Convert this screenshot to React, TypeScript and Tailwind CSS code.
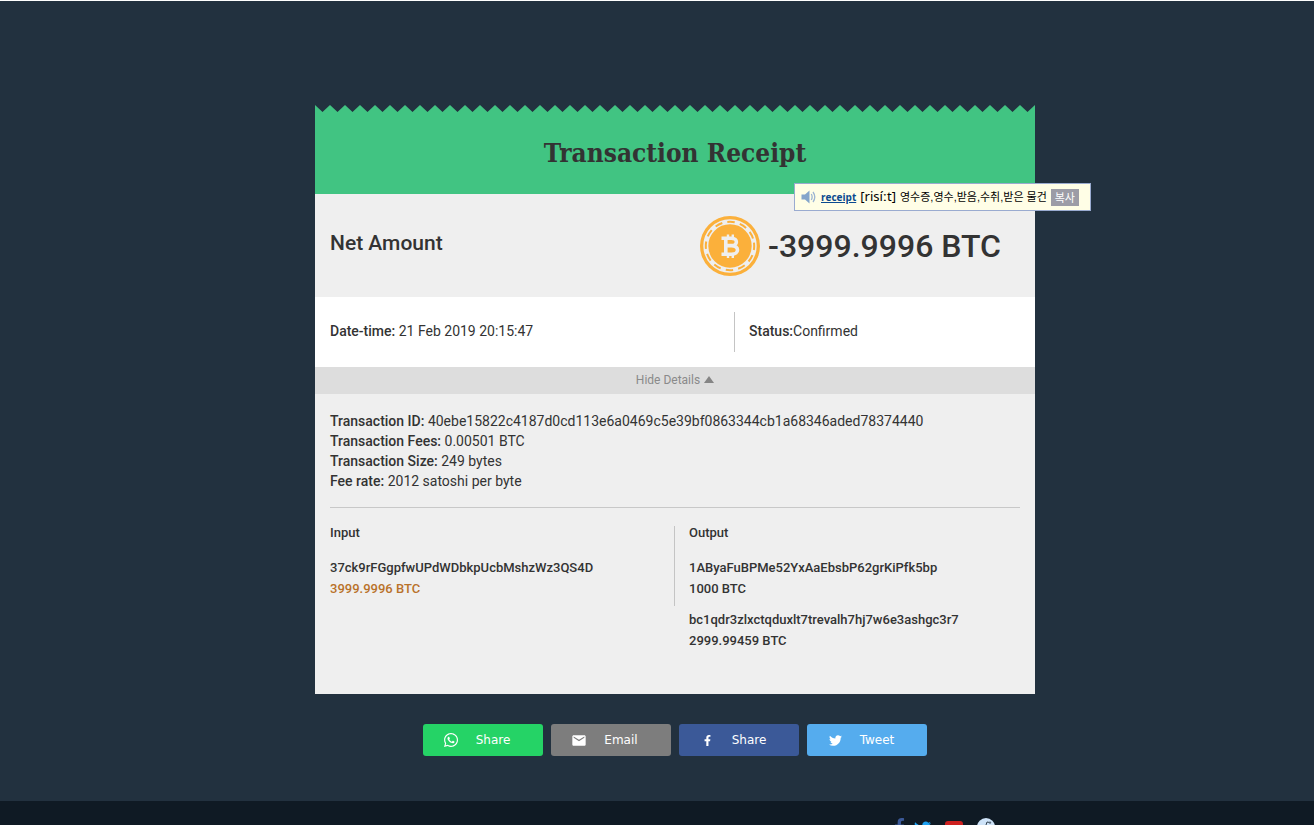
import React from "react";
import { FaFacebookF, FaTwitter, FaWhatsapp } from "react-icons/fa";
import { MdEmail } from "react-icons/md";

function ZigZag() {
  return (
    <svg className="block h-2 w-full" aria-hidden="true">
      <defs>
        <pattern id="teeth" width="15" height="8" patternUnits="userSpaceOnUse">
          <path d="M0 0L7.5 7L15 0V8H0Z" fill="#41c482" />
        </pattern>
      </defs>
      <rect width="100%" height="8" fill="url(#teeth)" />
    </svg>
  );
}

function Coin() {
  return (
    <svg viewBox="0 0 60 60" className="size-15 shrink-0" aria-hidden="true">
      <circle cx="30" cy="30" r="30" fill="#fbb03b" />
      <circle cx="30" cy="30" r="24.2" fill="none" stroke="#efefef" strokeWidth="5" />
      <circle
        cx="30"
        cy="30"
        r="24.2"
        fill="none"
        stroke="#fbb03b"
        strokeWidth="2"
        strokeDasharray="7.4 5.27"
        transform="rotate(-8 30 30)"
      />
      <g fill="none" stroke="#efefef" strokeWidth="3.6">
        <path d="M21.5 22.2H31.5C38 22.2 38 29.6 31.5 29.6H26M31.5 29.6C39.5 29.6 39.5 38.2 31.5 38.2H21.5M25.8 22V38" />
        <path d="M28 18.5V22M32.8 18.5V22M28 38V42M32.8 38V42" strokeWidth="2.4" />
      </g>
    </svg>
  );
}

function Speaker() {
  return (
    <svg viewBox="0 0 16 14" className="h-3.5 w-4 shrink-0" aria-hidden="true">
      <path d="M0.5 4.5H4L8.5 0.5V13.5L4 9.5H0.5Z" fill="#84a5cb" />
      <path
        d="M10.3 4Q12 7 10.3 10M12 2Q15.6 7 12 12"
        fill="none"
        stroke="#9db5d3"
        strokeWidth="1.3"
      />
    </svg>
  );
}

function DictionaryTip() {
  return (
    <div className="absolute top-[78px] left-[479px] flex h-7 w-[297px] items-center gap-1 border border-[#9aabd0] bg-[#fffee6] pl-1.5 whitespace-nowrap text-black">
      <Speaker />
      <a
        href="#receipt"
        className="font-['Open_Sans',sans-serif] text-[10px] font-bold text-[#0b4a8f] underline"
      >
        receipt
      </a>
      <span className="font-['Noto_Sans',sans-serif] text-[13px]">[risíːt]</span>
      <span className="font-['Liberation_Sans','Noto_Sans_CJK_KR',sans-serif] text-[11px]">
        영수증,영수,받음,수취,받은 물건
      </span>
      <button
        type="button"
        className="h-[17px] w-7 bg-[#9c9ca6] font-['Noto_Sans_CJK_KR',sans-serif] text-[11px] leading-[17px] text-white"
      >
        복사
      </button>
    </div>
  );
}

const details = [
  ["Transaction ID:", "40ebe15822c4187d0cd113e6a0469c5e39bf0863344cb1a68346aded78374440"],
  ["Transaction Fees:", "0.00501 BTC"],
  ["Transaction Size:", "249 bytes"],
  ["Fee rate:", "2012 satoshi per byte"],
];

const outputs = [
  ["1AByaFuBPMe52YxAaEbsbP62grKiPfk5bp", "1000 BTC"],
  ["bc1qdr3zlxctqduxlt7trevalh7hj7w6e3ashgc3r7", "2999.99459 BTC"],
];

const shares = [
  { label: "Share", color: "bg-[#25d366]", icon: <FaWhatsapp size={16} /> },
  { label: "Email", color: "bg-[#7d7d7d]", icon: <MdEmail size={17} /> },
  { label: "Share", color: "bg-[#3b5998]", icon: <FaFacebookF size={11} /> },
  { label: "Tweet", color: "bg-[#55acee]", icon: <FaTwitter size={13} /> },
];

function Receipt() {
  return (
    <section className="relative">
      <ZigZag />
      <header className="flex h-[81px] items-center justify-center bg-[#41c482]">
        <h1 className="font-['Roboto_Slab','DejaVu_Serif_Condensed','DejaVu_Serif',serif] text-[26px] font-bold">
          Transaction Receipt
        </h1>
      </header>
      <div className="flex h-[103px] items-center justify-between bg-[#efefef] pr-[34px] pl-[15px]">
        <h2 className="pb-1 text-[21px] font-medium">Net Amount</h2>
        <div className="flex items-center gap-2">
          <Coin />
          <span className="text-[32px] font-medium">-3999.9996 BTC</span>
        </div>
      </div>
      <div className="flex items-center bg-white py-[15px] text-sm">
        <p className="h-10 w-[420px] border-r border-[#c4c4c4] pl-[15px] leading-[38px]">
          <b className="font-medium">Date-time:</b> 21 Feb 2019 20:15:47
        </p>
        <p className="h-10 pl-[14px] leading-[38px]">
          <b className="font-medium">Status:</b>Confirmed
        </p>
      </div>
      <button
        type="button"
        className="flex h-[27px] w-full items-center justify-center gap-1 bg-[#dddddd] pb-0.5 text-xs text-[#8a8a8a]"
      >
        Hide Details
        <svg viewBox="0 0 10 7" className="h-[7px] w-2.5" aria-hidden="true">
          <path d="M5 0L10 7H0Z" fill="#858585" />
        </svg>
      </button>
      <div className="bg-[#efefef] px-[15px] pt-[17px] pb-[43px]">
        <div className="border-b border-[#c8c8c8] pb-4 text-sm">
          {details.map(([name, value]) => (
            <p key={name}>
              <b className="font-medium">{name}</b> {value}
            </p>
          ))}
        </div>
        <div className="mt-[18px] flex items-start text-[13px] leading-[21px] font-medium">
          <div className="h-20 w-1/2 border-r border-[#c4c4c4]">
            <h3 className="-mt-1">Input</h3>
            <p className="mt-3.5">37ck9rFGgpfwUPdWDbkpUcbMshzWz3QS4D</p>
            <p className="text-[#b9722a]">3999.9996 BTC</p>
          </div>
          <div className="pl-[14px]">
            <h3 className="-mt-1 mb-3.5">Output</h3>
            {outputs.map(([address, amount]) => (
              <div key={address} className="mb-2.5 last:mb-0">
                <p>{address}</p>
                <p>{amount}</p>
              </div>
            ))}
          </div>
        </div>
      </div>
      <DictionaryTip />
    </section>
  );
}

export default function App() {
  return (
    <div className="flex h-screen flex-col overflow-hidden border-t border-white bg-[#22313f] font-['Roboto',sans-serif] text-[#333333]">
      <main className="shrink-0 pt-[104px] pb-[45px] pl-9">
        <div className="mx-auto w-full max-w-[720px]">
          <Receipt />
          <div className="mt-[30px] flex justify-center gap-2">
            {shares.map(({ label, color, icon }) => (
              <button
                key={color}
                type="button"
                className={`flex h-8 w-[120px] items-center rounded-[3px] pr-4 pl-5 font-['DejaVu_Sans',sans-serif] text-xs text-white ${color}`}
              >
                <span className="flex w-4 justify-center">{icon}</span>
                <span className="flex-1 text-center">{label}</span>
              </button>
            ))}
          </div>
        </div>
      </main>
      <footer className="shrink-0 bg-[#0f1a24] pt-[17px] pl-9">
        <div className="mx-auto flex w-full max-w-[720px] items-start justify-end gap-3.5 pr-10">
          <a href="#facebook" aria-label="Facebook" className="-mr-2">
            <FaFacebookF size={17} color="#3b5998" />
          </a>
          <a href="#twitter" aria-label="Twitter" className="pt-0.5">
            <FaTwitter size={17} color="#1da1f2" />
          </a>
          <a href="#youtube" aria-label="YouTube">
            <svg viewBox="0 0 18 14" className="mt-[3px] h-3.5 w-[18px]" aria-hidden="true">
              <rect width="18" height="14" rx="3" fill="#cd201f" />
              <path d="M7 4L12 7L7 10Z" fill="#ffffff" />
            </svg>
          </a>
          <a href="#reddit" aria-label="Reddit">
            <svg viewBox="0 0 18 18" className="size-[18px]" aria-hidden="true">
              <circle cx="9" cy="9" r="9" fill="#cee3f8" />
              <path d="M9 7L10 4L13 4.6" fill="none" stroke="#33424f" />
              <circle cx="13" cy="4.6" r="1.2" fill="#5c6d7c" />
              <ellipse cx="9" cy="11" rx="6" ry="4" fill="#ffffff" />
            </svg>
          </a>
        </div>
      </footer>
    </div>
  );
}
